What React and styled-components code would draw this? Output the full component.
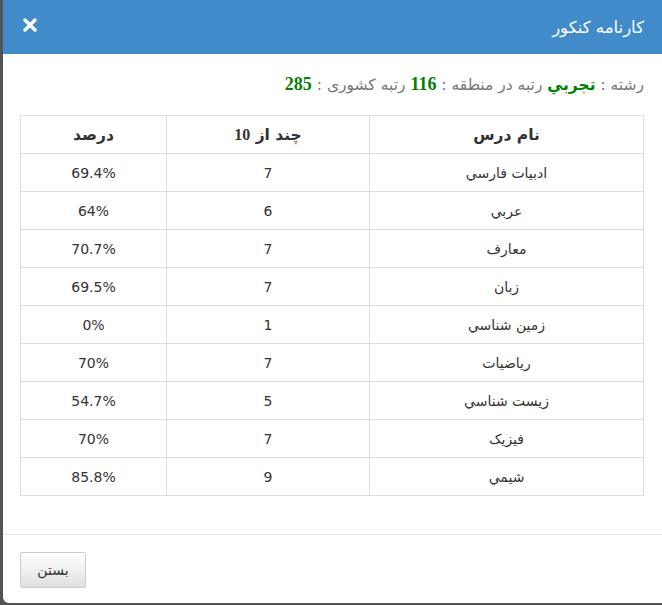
import styled, { createGlobalStyle } from "styled-components";

const Global = createGlobalStyle`
  html, body {
    margin: 0;
    padding: 0;
    overflow: hidden;
    background: #4a4a4a;
  }
`;

const Backdrop = styled.div`
  height: 605px;
  padding-left: 3px;
  background: #525556;
`;

const Modal = styled.div`
  width: 659px;
  height: 603px;
  background: #fff;
  border-radius: 0 0 0 6px;
  display: flex;
  flex-direction: column;
  direction: rtl;
  font-family: "DejaVu Sans", Tahoma, sans-serif;
  color: #333;
  overflow: hidden;
`;

const Header = styled.div`
  height: 54px;
  flex: none;
  background: #428bca;
  display: flex;
  align-items: center;
  justify-content: space-between;
  padding: 0 18px 0 20px;
`;

const Title = styled.h4`
  margin: 0;
  color: #fff;
  font-size: 16.5px;
  font-weight: normal;
`;

const Close = styled.button`
  border: none;
  background: none;
  padding: 0;
  width: 14px;
  height: 14px;
  display: flex;
  cursor: pointer;
  margin-top: -5px;
`;

const Body = styled.div`
  flex: 1;
  padding: 20px 18px 0 17px;
`;

const Info = styled.p`
  margin: 0 0 21px;
  height: 20px;
  line-height: 20px;
  font-size: 15.5px;
  color: #777;
`;

const Strong = styled.b`
  color: #008000;
  font-size: ${(p) => (p.$num ? "18px" : "15.5px")};
  font-family: ${(p) =>
    p.$num ? '"Liberation Serif", serif' : '"DejaVu Sans", sans-serif'};
`;

const Table = styled.table`
  width: 100%;
  border-collapse: collapse;
  border: 1px solid #ddd;
  font-size: 14px;
`;

const Th = styled.th`
  height: 37px;
  padding: 0;
  border: 1px solid #ddd;
  text-align: center;
  font-weight: bold;
  font-size: 15.5px;
  width: ${(p) => p.$w};

  span {
    font-family: "Liberation Serif", serif;
    font-size: 16px;
  }
`;

const Td = styled.td`
  height: 37px;
  padding: 0;
  border: 1px solid #ddd;
  text-align: center;
`;

const Footer = styled.div`
  flex: none;
  height: 69px;
  border-top: 1px solid #e5e5e5;
  padding: 17px 17px 0;
  box-sizing: border-box;
  display: flex;
  align-items: flex-start;
  justify-content: flex-end;
`;

const Button = styled.button`
  width: 66px;
  height: 36px;
  border: 1px solid #ccc;
  border-radius: 2px;
  background: linear-gradient(#fff, #e0e0e0);
  font-family: "DejaVu Sans", Tahoma, sans-serif;
  font-size: 14px;
  color: #333;
  cursor: pointer;
`;

const rows = [
  ["ادبيات فارسي", 7, "69.4%"],
  ["عربي", 6, "64%"],
  ["معارف", 7, "70.7%"],
  ["زبان", 7, "69.5%"],
  ["زمين شناسي", 1, "0%"],
  ["رياضيات", 7, "70%"],
  ["زيست شناسي", 5, "54.7%"],
  ["فيزيک", 7, "70%"],
  ["شيمي", 9, "85.8%"],
];

export default function App() {
  return (
    <>
      <Global />
      <Backdrop>
        <Modal>
          <Header>
            <Title>کارنامه کنکور</Title>
            <Close aria-label="close">
              <svg width="14" height="14" viewBox="0 0 14 14">
                <path
                  d="M2 2 L12 12 M12 2 L2 12"
                  stroke="#fff"
                  strokeWidth="3.4"
                  strokeLinecap="round"
                />
              </svg>
            </Close>
          </Header>
          <Body>
            <Info>
              رشته : <Strong>تجربي</Strong> رتبه در منطقه : <Strong $num>116</Strong>{" "}
              رتبه کشوری : <Strong $num>285</Strong>
            </Info>
            <Table>
              <thead>
                <tr>
                  <Th $w="273px">نام درس</Th>
                  <Th $w="202px">
                    چند از <span>10</span>
                  </Th>
                  <Th>درصد</Th>
                </tr>
              </thead>
              <tbody>
                {rows.map(([name, score, pct]) => (
                  <tr key={name}>
                    <Td>{name}</Td>
                    <Td>{score}</Td>
                    <Td>{pct}</Td>
                  </tr>
                ))}
              </tbody>
            </Table>
          </Body>
          <Footer>
            <Button>بستن</Button>
          </Footer>
        </Modal>
      </Backdrop>
    </>
  );
}
